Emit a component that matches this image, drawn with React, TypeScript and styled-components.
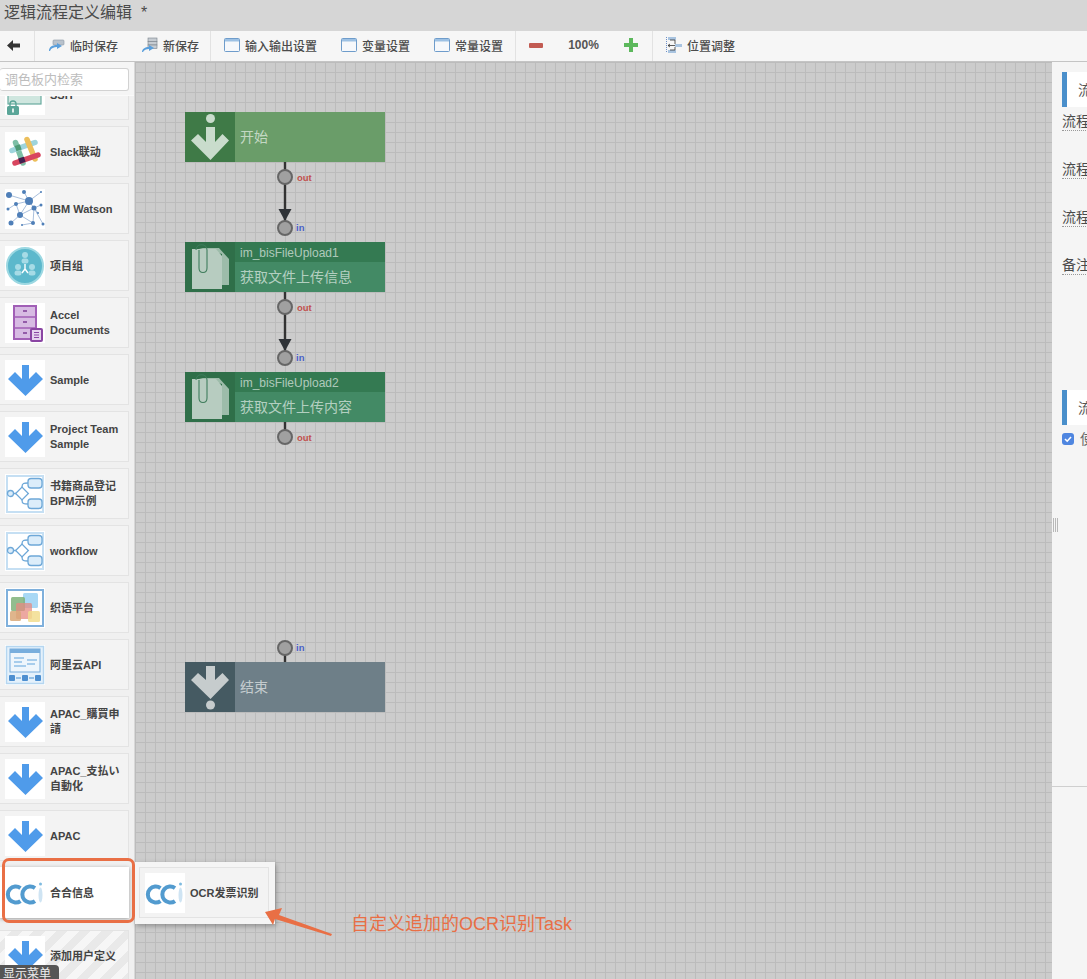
import * as React from "react";
import styled, { createGlobalStyle } from "styled-components";

const FONT = `"Liberation Sans", "Noto Sans CJK SC", sans-serif`;
const ORANGE = "#e96f45";

const GlobalStyle = createGlobalStyle`
  html, body {
    margin: 0;
    padding: 0;
    background: #f5f5f5;
  }
  * {
    box-sizing: border-box;
  }
`;

const Page = styled.div`
  position: relative;
  display: flex;
  flex-direction: column;
  width: 1087px;
  height: 979px;
  overflow: hidden;
  font-family: ${FONT};
  color: #444;
`;

const TitleBar = styled.div`
  height: 31px;
  flex: none;
  padding: 3px 0 0 4px;
  background: #d6d6d6;
  font-size: 16px;
  line-height: 20px;
  color: #4a4a4a;
  white-space: pre;
`;

const Toolbar = styled.div`
  display: flex;
  height: 31px;
  flex: none;
  background: #f6f6f6;
  border-bottom: 1px solid #c4c4c4;
`;

const ToolGroup = styled.div<{ $width?: number; $gap?: number }>`
  display: flex;
  align-items: center;
  gap: ${(p) => p.$gap ?? 24}px;
  width: ${(p) => (p.$width ? `${p.$width}px` : "auto")};
  padding: 0 0 2px 13px;
  border-right: 1px solid #e2e2e2;
  &:first-child {
    padding-left: 7px;
  }
  &:last-child {
    border-right: 0;
  }
`;

const ToolButton = styled.div`
  display: flex;
  align-items: center;
  gap: 5px;
  font-size: 12px;
  font-weight: 500;
  color: #4c4c4c;
  white-space: nowrap;
  svg {
    flex: none;
  }
`;

const Zoom = styled.span`
  width: 31px;
  text-align: center;
  font-size: 12px;
  font-weight: 700;
  color: #555;
`;

const Body = styled.div`
  display: flex;
  flex: 1;
  min-height: 0;
`;

const Sidebar = styled.div`
  display: flex;
  flex-direction: column;
  width: 135px;
  flex: none;
  background: #f0f0f0;
  border-right: 1px solid #d8d8d8;
`;

const SearchWrap = styled.div`
  height: 34px;
  flex: none;
  padding: 6px 5px 5px 0;
  background: #f5f5f5;
  border-bottom: 1px solid #fafafa;
`;

const Search = styled.input`
  display: block;
  width: 100%;
  height: 23px;
  padding: 0 0 0 5px;
  border: 1px solid #d2d2d2;
  border-left: 0;
  border-radius: 3px;
  background: #fff;
  font-family: ${FONT};
  font-size: 13px;
  outline: none;
  &::placeholder {
    color: #bdbdbd;
    opacity: 1;
  }
`;

const PaletteList = styled.div`
  flex: 1;
  min-height: 0;
  overflow: hidden;
`;

const PaletteScroll = styled.div`
  display: flex;
  flex-direction: column;
  gap: 6px;
  margin-top: -27px;
  padding-right: 5px;
  margin-left: -1px;
`;

const PaletteItem = styled.div<{ $selected?: boolean; $striped?: boolean }>`
  display: flex;
  align-items: center;
  gap: 5px;
  height: 51px;
  flex: none;
  padding-left: 5px;
  border: 1px solid #e3e3e3;
  background: #f3f3f3;
  font-size: 11px;
  font-weight: 700;
  line-height: 15px;
  color: #444;
  ${(p) =>
    p.$selected &&
    `
    background: #fff;
    border-color: #fff;
    box-shadow: 0 1px 4px rgba(0, 0, 0, 0.35);
    margin-left: 1px;
    padding-left: 4px;
  `}
  ${(p) =>
    p.$striped &&
    `
    margin-top: 6px;
    background: repeating-linear-gradient(135deg, #f6f6f6 0 8px, #e9e9e9 8px 16px);
  `}
`;

const IconBox = styled.div`
  position: relative;
  width: 40px;
  height: 40px;
  flex: none;
  background: #fff;
  svg {
    display: block;
  }
`;

const ItemLabel = styled.span`
  width: 72px;
  flex: none;
  padding-top: 1px;
  word-break: break-word;
`;

const Canvas = styled.div`
  position: relative;
  flex: 1;
  min-width: 0;
  background-color: #cccccc;
  background-image: linear-gradient(#bcbcbc 1px, transparent 1px),
    linear-gradient(90deg, #bcbcbc 1px, transparent 1px);
  background-size: 10px 10px;
`;

const Wires = styled.svg`
  position: absolute;
  left: 0;
  top: 0;
`;

const PortLabel = styled.text<{ $kind: "in" | "out" }>`
  font-family: ${FONT};
  font-size: 9.5px;
  font-weight: 700;
  fill: ${(p) => (p.$kind === "in" ? "#4a5fc8" : "#c0504d")};
`;

const FlowNode = styled.div<{ $top: number; $tone: string }>`
  position: absolute;
  left: 50px;
  top: ${(p) => p.$top}px;
  display: flex;
  width: 200px;
  height: 50px;
  background: ${(p) => p.$tone};
  color: rgba(255, 255, 255, 0.62);
`;

const NodeIcon = styled.div<{ $tone: string }>`
  width: 50px;
  height: 50px;
  flex: none;
  background: ${(p) => p.$tone};
  svg {
    display: block;
  }
`;

const NodeText = styled.div`
  display: flex;
  flex-direction: column;
  flex: 1;
`;

const NodeName = styled.div`
  height: 20px;
  padding: 1px 0 0 5px;
  background: #347a52;
  font-size: 12px;
  line-height: 20px;
`;

const NodeCaption = styled.div`
  display: flex;
  align-items: center;
  flex: 1;
  padding: 0 0 2px 5px;
  font-size: 14px;
`;

const Flyout = styled.div`
  position: absolute;
  left: 0;
  top: 800px;
  width: 140px;
  height: 62px;
  padding: 5px 6px 6px 4px;
  background: #f5f5f5;
  box-shadow: 1px 2px 5px rgba(0, 0, 0, 0.3);
`;

const FlyoutItem = styled(PaletteItem)`
  width: 130px;
  gap: 5px;
`;

const Annotation = styled.div`
  position: absolute;
  left: 216px;
  top: 850px;
  font-size: 18px;
  line-height: 24px;
  color: ${ORANGE};
  white-space: nowrap;
`;

const PropertyPanel = styled.div`
  display: flex;
  flex-direction: column;
  width: 35px;
  flex: none;
  position: relative;
  padding-top: 10px;
  background: #f5f5f5;
  overflow: hidden;
`;

const Grip = styled.div`
  position: absolute;
  left: 1px;
  top: 456px;
  width: 6px;
  height: 14px;
  background: repeating-linear-gradient(90deg, #b8b8b8 0 1px, transparent 1px 2px);
`;

const SectionHead = styled.div`
  width: 100px;
  height: 35px;
  margin-left: 10px;
  padding-left: 11px;
  flex: none;
  background: #fff;
  border-left: 5px solid #4a8fcb;
  font-size: 14px;
  line-height: 37px;
  color: #555;
  white-space: nowrap;
`;

const Field = styled.div<{ $after?: number }>`
  width: 100px;
  height: 24px;
  flex: none;
  margin: 0 0 ${(p) => p.$after ?? 24}px 10px;
  padding-top: 2px;
  border-bottom: 1px dotted #999;
  font-size: 14px;
  line-height: 24px;
  color: #4a4a4a;
  white-space: nowrap;
`;

const CheckRow = styled.label`
  display: flex;
  align-items: center;
  gap: 6px;
  width: 100px;
  height: 14px;
  flex: none;
  margin: 7px 0 0 10px;
  font-size: 14px;
  line-height: 14px;
  color: #666;
  white-space: nowrap;
`;

const CheckBox = styled.span`
  display: flex;
  align-items: center;
  justify-content: center;
  width: 12px;
  height: 12px;
  flex: none;
  border-radius: 3px;
  background: #4f86e0;
`;

const PanelFooter = styled.div`
  height: 193px;
  margin-top: auto;
  flex: none;
  border-top: 1px solid #cfcfcf;
`;

const Callout = styled.div`
  position: absolute;
  left: 2px;
  top: 858px;
  width: 133px;
  height: 65px;
  border: 3px solid ${ORANGE};
  border-radius: 7px;
`;

const ArrowMark = styled.svg`
  position: absolute;
  left: 260px;
  top: 900px;
`;

const MenuTab = styled.div`
  position: absolute;
  left: 0;
  bottom: 0;
  width: 59px;
  height: 14px;
  padding-left: 3px;
  border-radius: 0 4px 0 0;
  background: #555;
  font-size: 12px;
  line-height: 18px;
  color: #eee;
  white-space: nowrap;
  overflow: hidden;
`;

const Svg40: React.FC<{ children: React.ReactNode }> = ({ children }) => (
  <svg width="40" height="40" viewBox="0 0 40 40">
    {children}
  </svg>
);

const ArrowIcon = () => (
  <Svg40>
    <polygon points="17,5 24,5 24,19 31,12 38,19 20.5,36 3,19 10,12 17,19" fill="#4f9bea" />
  </Svg40>
);

const SshIcon = () => (
  <Svg40>
    <rect x="3" y="-6" width="33" height="35" fill="#cfe6df" stroke="#68ab9f" strokeWidth="1.2" />
    <rect x="2" y="31" width="12" height="9" rx="1.5" fill="#5aa598" />
    <path d="M5 31v-2a3 3 0 0 1 6 0v2" fill="none" stroke="#5aa598" strokeWidth="1.4" />
    <rect x="7.2" y="33.5" width="1.6" height="4" fill="#fff" />
  </Svg40>
);

const SlackIcon = () => (
  <Svg40>
    <g strokeWidth="5.5" strokeLinecap="round" fill="none">
      <path d="M10.5 10.5L18 31" stroke="#7dbfa6" />
      <path d="M7 18.5L30 10.5" stroke="#9ed4dc" />
      <path d="M22 7.5L30 27" stroke="#ecbf5c" />
      <path d="M10 31L33 23" stroke="#d8465f" />
    </g>
    <rect x="13.8" y="25.5" width="6" height="5.5" fill="#43204f" transform="rotate(-19 16.8 28)" />
    <rect x="10.5" y="13" width="5.5" height="5.5" fill="#4d9a75" transform="rotate(-19 13 16)" />
  </Svg40>
);

const WatsonIcon = () => {
  const dots: [number, number, number][] = [
    [4, 6, 3], [19, 3, 2], [36, 3, 1], [24, 12, 4], [11, 15, 2], [36, 16, 1.5], [3, 20, 1.5],
    [15, 26, 3], [29, 19, 2.5], [6, 34, 2.5], [17, 36, 1], [28, 34, 2], [38, 35, 1.5], [33, 24, 1],
  ];
  return (
    <Svg40>
      <path
        d="M4 6L24 12M19 3L24 12M36 3L24 12M11 15L24 12M11 15L15 26M24 12L15 26M36 16L29 19M24 12L29 19M15 26L29 19M3 20L11 15M15 26L6 34M29 19L28 34M15 26L28 34M17 36L28 34M29 19L38 35M29 19L33 24"
        stroke="#93aed3"
        strokeWidth="0.8"
        fill="none"
      />
      {dots.map(([x, y, r]) => (
        <circle key={`${x}-${y}`} cx={x} cy={y} r={r} fill="#4f7fb8" />
      ))}
    </Svg40>
  );
};

const TeamIcon = () => (
  <Svg40>
    <circle cx="20" cy="20" r="18" fill="#5cb8cc" stroke="#9cd8e2" strokeWidth="2" />
    <g fill="#a6dbe6">
      <circle cx="20" cy="9" r="3" />
      <rect x="16.5" y="12.5" width="7" height="5" rx="2.5" />
      <circle cx="13" cy="21" r="3" />
      <rect x="9.5" y="24.5" width="7" height="5" rx="2.5" />
      <circle cx="27" cy="21" r="3" />
      <rect x="23.5" y="24.5" width="7" height="5" rx="2.5" />
    </g>
    <path d="M20 18v5M20 23l-3 4M20 23l3 4" stroke="#fff" strokeWidth="1.4" fill="none" />
  </Svg40>
);

const CabinetIcon = () => (
  <Svg40>
    <rect x="9" y="3" width="22" height="33" fill="#d7bbe3" stroke="#a15fb6" strokeWidth="2" />
    <path d="M9 14h22M9 25h22" stroke="#a15fb6" strokeWidth="1.5" />
    <path d="M18 8h4M18 19h4M18 30h4" stroke="#7d3c96" strokeWidth="1.5" />
    <rect x="26" y="26" width="11" height="12" rx="1" fill="#e6d3ee" stroke="#8a45a3" strokeWidth="2" />
    <path d="M29 29.5h5M29 32h5M29 34.5h5" stroke="#8a45a3" strokeWidth="1" />
  </Svg40>
);

const FlowIcon = () => (
  <Svg40>
    <rect x="2" y="2" width="36" height="36" fill="#fff" stroke="#c5dff3" strokeWidth="2" />
    <g fill="#dcedfa" stroke="#6ea8d8" strokeWidth="1.3">
      <circle cx="5.5" cy="19.5" r="3" />
      <rect x="12.5" y="15" width="9" height="9" transform="rotate(45 17 19.5)" fill="#fff" />
      <rect x="23" y="4.5" width="14" height="9.5" rx="3" />
      <rect x="23" y="25" width="14" height="9.5" rx="3" />
    </g>
    <path d="M8.5 19.5h2.5M17 13c0-4 2-4 6-4M17 26c0 4 2 4 6 4" stroke="#6ea8d8" strokeWidth="1.3" fill="none" />
  </Svg40>
);

const WeaveIcon = () => (
  <Svg40>
    <rect x="2" y="2" width="36" height="36" fill="#fff" stroke="#7fb0dc" strokeWidth="2" />
    <rect x="18" y="5" width="15" height="15" rx="1.5" fill="#a8d8f5" />
    <rect x="6" y="9" width="14" height="14" rx="1.5" fill="#7fb27a" opacity=".85" />
    <rect x="11" y="15" width="16" height="16" rx="1.5" fill="#e58b82" opacity=".75" />
    <rect x="5" y="23" width="11" height="10" rx="1.5" fill="#d9a878" opacity=".85" />
    <rect x="23" y="23" width="12" height="11" rx="1.5" fill="#f2dd8e" opacity=".85" />
  </Svg40>
);

const AliyunIcon = () => (
  <Svg40>
    <rect x="1.5" y="1.5" width="37" height="37" fill="#e4f1fb" stroke="#b5d6f0" strokeWidth="1.5" />
    <rect x="5" y="4" width="30" height="23" fill="#eef6fc" stroke="#78aedd" strokeWidth="1" />
    <rect x="5" y="4" width="30" height="4" fill="#78aedd" />
    <path d="M9 13h10M9 17h8M9 21h12M22 15h10M22 19h8" stroke="#a7cdec" strokeWidth="2" />
    <rect x="4" y="30" width="6" height="6" rx="1" fill="#4d8fd0" />
    <rect x="17" y="30" width="6" height="6" rx="1" fill="#4d8fd0" />
    <rect x="30" y="30" width="6" height="6" rx="1" fill="#4d8fd0" />
    <path d="M11 33h5M24 33h5" stroke="#7bb0de" strokeWidth="1.5" />
  </Svg40>
);

const CciIcon = () => (
  <Svg40>
    <g fill="none" stroke="#529bcf" strokeWidth="4">
      <path d="M15.5 15a8 8 0 1 0 0 13" />
      <path d="M30 15a8 8 0 1 0 0 13" />
    </g>
    <circle cx="35.5" cy="11" r="1.5" fill="#7fbbe0" />
    <ellipse cx="35.5" cy="22" rx="2" ry="7.5" fill="#cfe4f3" />
  </Svg40>
);

const SaveIcon = () => (
  <svg width="17" height="16" viewBox="0 0 17 16">
    <rect x="5" y="3" width="11" height="5" rx="1" fill="#b9c2cc" stroke="#8a97a5" strokeWidth=".6" />
    <path d="M1 14c0-4 3-6 8-6V6l5 3-5 3v-2c-3 0-6 1-7 4z" fill="#5a9fdc" />
  </svg>
);

const NewSaveIcon = () => (
  <svg width="16" height="16" viewBox="0 0 16 16">
    <g fill="#c6ccd2" stroke="#77808a" strokeWidth=".6">
      <rect x="6" y="1" width="9" height="3.5" />
      <rect x="6" y="4.5" width="9" height="3.5" />
      <rect x="6" y="8" width="9" height="3.5" />
    </g>
    <path d="M0 15c0-3 3-5 7-5V8l5 3-5 3v-2c-3 0-5 1-6 3z" fill="#5a9fdc" />
  </svg>
);

const WindowIcon = () => (
  <svg width="16" height="14" viewBox="0 0 16 14">
    <rect x=".5" y=".5" width="15" height="13" rx="1" fill="#f6f8fb" stroke="#6e9ccb" />
    <rect x="1" y="1" width="14" height="2.5" fill="#9dc1e4" />
  </svg>
);

const MinusIcon = () => (
  <svg width="14" height="5" viewBox="0 0 14 5">
    <rect width="14" height="5" rx="1" fill="#c25b52" />
  </svg>
);

const PlusIcon = () => (
  <svg width="14" height="14" viewBox="0 0 14 14">
    <path d="M5 0h4v5h5v4H9v5H5V9H0V5h5z" fill="#5cb85c" />
  </svg>
);

const LayoutIcon = () => (
  <svg width="16" height="16" viewBox="0 0 16 16">
    <path d="M.5 0v16" stroke="#6c8fc8" strokeDasharray="1 1" />
    <rect x="2" y="0" width="8" height="3" fill="#a9c4e0" />
    <rect x="9" y="7" width="7" height="3" fill="#a9c4e0" />
    <rect x="2" y="13" width="8" height="3" fill="#a9c4e0" />
    <path d="M4 3h5v4M9 10v3H4M9 8.5H2M4 7L2 8.5 4 10" stroke="#333" fill="none" strokeWidth=".8" />
  </svg>
);

const BackIcon = () => (
  <svg width="13" height="11" viewBox="0 0 13 11">
    <path d="M6 0v3.5h7v4H6V11L0 5.5z" fill="#333" />
  </svg>
);

const StartGlyph = () => (
  <svg width="50" height="50" viewBox="0 0 50 50">
    <circle cx="25.5" cy="6.5" r="4.5" fill="#c9dccc" />
    <polygon points="21,15 30,15 30,30 37.5,22 44,28.5 25.5,48 6,28.5 13,22 21,30" fill="#c9dccc" />
  </svg>
);

const EndGlyph = () => (
  <svg width="50" height="50" viewBox="0 0 50 50">
    <polygon points="21,4 30,4 30,18 37.5,11 44,18 25.5,37 6,18 13,11 21,18" fill="#c6cccd" />
    <circle cx="25.5" cy="43" r="4.5" fill="#c6cccd" />
  </svg>
);

const FilesGlyph = () => (
  <svg width="50" height="50" viewBox="0 0 50 50">
    <path d="M14 6h20l10 11v26h-7V12z" fill="#9dbcaa" />
    <path d="M7 7h24l6 7v33H7z" fill="#b7ccc0" />
    <path
      d="M11 8c0-7 11-7 11 0v18c0 6-8 6-8 0V8"
      fill="none"
      stroke="#3f7d5c"
      strokeWidth="1.1"
    />
  </svg>
);

type Palette = {
  label: React.ReactNode;
  icon: React.ReactNode;
  selected?: boolean;
  striped?: boolean;
};

const paletteItems: Palette[] = [
  { label: "SSH", icon: <SshIcon /> },
  { label: "Slack联动", icon: <SlackIcon /> },
  { label: "IBM Watson", icon: <WatsonIcon /> },
  { label: "项目组", icon: <TeamIcon /> },
  { label: "Accel Documents", icon: <CabinetIcon /> },
  { label: "Sample", icon: <ArrowIcon /> },
  { label: "Project Team Sample", icon: <ArrowIcon /> },
  { label: "书籍商品登记 BPM示例", icon: <FlowIcon /> },
  { label: "workflow", icon: <FlowIcon /> },
  { label: "织语平台", icon: <WeaveIcon /> },
  { label: "阿里云API", icon: <AliyunIcon /> },
  { label: "APAC_購買申請", icon: <ArrowIcon /> },
  { label: "APAC_支払い自動化", icon: <ArrowIcon /> },
  { label: "APAC", icon: <ArrowIcon /> },
  { label: "合合信息", icon: <CciIcon />, selected: true },
  { label: "添加用户定义", icon: <ArrowIcon />, striped: true },
];

const ports: { y: number; kind: "in" | "out" }[] = [
  { y: 115, kind: "out" },
  { y: 166, kind: "in" },
  { y: 245, kind: "out" },
  { y: 296, kind: "in" },
  { y: 375, kind: "out" },
  { y: 586, kind: "in" },
];

const App: React.FC = () => {
  return (
    <Page>
      <GlobalStyle />
      <TitleBar>逻辑流程定义编辑  *</TitleBar>
      <Toolbar>
        <ToolGroup $width={35}>
          <BackIcon />
        </ToolGroup>
        <ToolGroup $width={176}>
          <ToolButton>
            <SaveIcon />
            临时保存
          </ToolButton>
          <ToolButton>
            <NewSaveIcon />
            新保存
          </ToolButton>
        </ToolGroup>
        <ToolGroup $width={305}>
          <ToolButton>
            <WindowIcon />
            输入输出设置
          </ToolButton>
          <ToolButton>
            <WindowIcon />
            变量设置
          </ToolButton>
          <ToolButton>
            <WindowIcon />
            常量设置
          </ToolButton>
        </ToolGroup>
        <ToolGroup $width={137} $gap={25}>
          <MinusIcon />
          <Zoom>100%</Zoom>
          <PlusIcon />
        </ToolGroup>
        <ToolGroup>
          <ToolButton>
            <LayoutIcon />
            位置调整
          </ToolButton>
        </ToolGroup>
      </Toolbar>
      <Body>
        <Sidebar>
          <SearchWrap>
            <Search placeholder="调色板内检索" readOnly />
          </SearchWrap>
          <PaletteList>
            <PaletteScroll>
              {paletteItems.map((item, i) => (
                <PaletteItem key={i} $selected={item.selected} $striped={item.striped}>
                  <IconBox>{item.icon}</IconBox>
                  <ItemLabel>{item.label}</ItemLabel>
                </PaletteItem>
              ))}
            </PaletteScroll>
          </PaletteList>
        </Sidebar>
        <Canvas>
          <Wires width="917" height="917">
            <path d="M150 100v60M150 230v60M150 360v20M150 586v14" stroke="#333" strokeWidth="2.4" fill="none" />
            <polygon points="143.5,147 156.5,147 150,159" fill="#2f3338" />
            <polygon points="143.5,277 156.5,277 150,289" fill="#2f3338" />
            {ports.map((port) => (
              <g key={port.y}>
                <circle cx="150" cy={port.y} r="7" fill="#a0a0a0" stroke="#666" strokeWidth="2" />
                <PortLabel
                  $kind={port.kind}
                  x={port.kind === "in" ? 161 : 162}
                  y={port.kind === "in" ? port.y + 3 : port.y + 4}
                >
                  {port.kind}
                </PortLabel>
              </g>
            ))}
          </Wires>
          <FlowNode $top={50} $tone="#6a9d69">
            <NodeIcon $tone="#3f7a47">
              <StartGlyph />
            </NodeIcon>
            <NodeText>
              <NodeCaption>开始</NodeCaption>
            </NodeText>
          </FlowNode>
          <FlowNode $top={180} $tone="#438a65">
            <NodeIcon $tone="#2f6f49">
              <FilesGlyph />
            </NodeIcon>
            <NodeText>
              <NodeName>im_bisFileUpload1</NodeName>
              <NodeCaption>获取文件上传信息</NodeCaption>
            </NodeText>
          </FlowNode>
          <FlowNode $top={310} $tone="#438a65">
            <NodeIcon $tone="#2f6f49">
              <FilesGlyph />
            </NodeIcon>
            <NodeText>
              <NodeName>im_bisFileUpload2</NodeName>
              <NodeCaption>获取文件上传内容</NodeCaption>
            </NodeText>
          </FlowNode>
          <FlowNode $top={600} $tone="#6e7f88">
            <NodeIcon $tone="#455a62">
              <EndGlyph />
            </NodeIcon>
            <NodeText>
              <NodeCaption>结束</NodeCaption>
            </NodeText>
          </FlowNode>
          <Flyout>
            <FlyoutItem>
              <IconBox>
                <CciIcon />
              </IconBox>
              <ItemLabel>OCR发票识别</ItemLabel>
            </FlyoutItem>
          </Flyout>
          <Annotation>自定义追加的OCR识别Task</Annotation>
        </Canvas>
        <PropertyPanel>
          <Grip />
          <SectionHead>流程定义信息</SectionHead>
          <Field>流程定义ID</Field>
          <Field>流程定义名</Field>
          <Field>流程定义版本</Field>
          <Field $after={115}>备注说明信息</Field>
          <SectionHead>流程设置信息</SectionHead>
          <CheckRow>
            <CheckBox>
              <svg width="10" height="10" viewBox="0 0 10 10">
                <path d="M2 5l2.2 2.2L8 3" stroke="#fff" strokeWidth="1.6" fill="none" />
              </svg>
            </CheckBox>
            使用此流程
          </CheckRow>
          <PanelFooter />
        </PropertyPanel>
      </Body>
      <Callout />
      <ArrowMark width="80" height="40" viewBox="0 0 80 40">
        <polygon points="5,12 22,8 19,15 72,34 71,36 15,19 13,25" fill={ORANGE} />
      </ArrowMark>
      <MenuTab>显示菜单</MenuTab>
    </Page>
  );
};

export default App;
